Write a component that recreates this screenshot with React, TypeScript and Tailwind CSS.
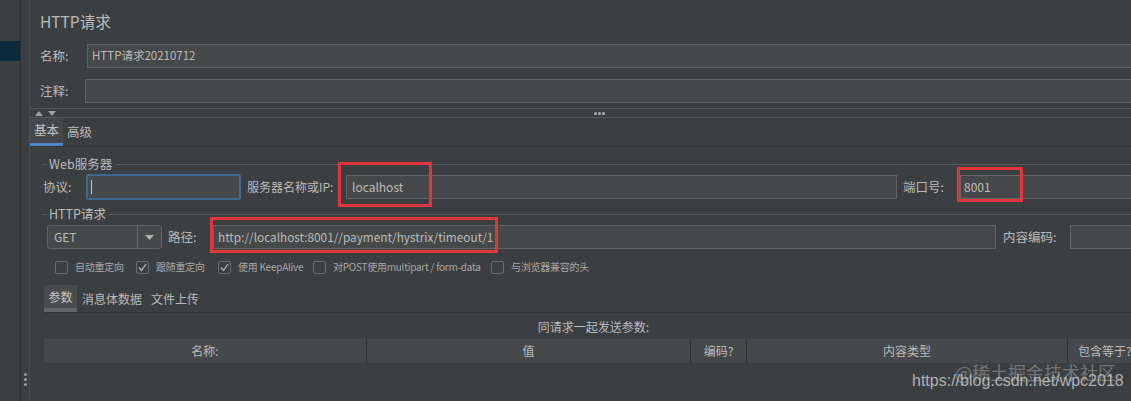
import React from "react";

const F = "font-['Noto_Sans_CJK_SC','Noto_Sans',sans-serif]";

function Check({ checked, label, w }: { checked?: boolean; label: string; w: string }) {
  return (
    <div className={`flex items-center shrink-0 ${w}`}>
      <div className="w-[13px] h-[13px] border border-[#6b6e70] rounded-[2px] bg-[#3c3f41] flex items-center justify-center shrink-0">
        {checked && (
          <svg width="11" height="11" viewBox="0 0 11 11">
            <path d="M2 5.5 L4.5 8.5 L9 2" fill="none" stroke="#b5b5b5" strokeWidth="1.3" />
          </svg>
        )}
      </div>
      <span className="ml-[7px] text-[10px] leading-none tracking-[-0.25px] text-[#a8a8a8] whitespace-nowrap">{label}</span>
    </div>
  );
}

function GroupTitle({ label }: { label: string }) {
  return (
    <div className="h-[16px] flex items-center">
      <div className="w-[5px] h-px bg-[#5a5d5f]" />
      <span className="ml-[1px] px-px text-[12.5px] leading-none whitespace-nowrap">{label}</span>
      <div className="flex-1 h-px bg-[#5a5d5f] ml-[2px]" />
    </div>
  );
}

export default function App() {
  return (
    <div className={`relative w-[1131px] h-[401px] overflow-hidden flex bg-[#3c3f41] text-[#bbbbbb] ${F}`}>
      {/* left tree strip */}
      <div className="w-[20px] shrink-0 flex flex-col">
        <div className="h-[41px]" />
        <div className="h-[20px] bg-[#0d293e]" />
      </div>
      <div className="w-px shrink-0 bg-[#2e3031]" />
      <div className="w-[8px] shrink-0 flex flex-col justify-end items-center pb-[15px]">
        <div className="flex flex-col gap-[2px]">
          <div className="w-[3px] h-[3px] rounded-full bg-[#9a9a9a]" />
          <div className="w-[3px] h-[3px] rounded-full bg-[#9a9a9a]" />
          <div className="w-[3px] h-[3px] rounded-full bg-[#9a9a9a]" />
        </div>
      </div>
      <div className="w-px shrink-0 bg-[#4c4f51]" />

      {/* main */}
      <div className="flex-1 min-w-0 flex flex-col">
        <div className="h-[44px] flex items-center pl-[10px] text-[15.5px] leading-none">HTTP请求</div>

        <div className="h-[24px] flex">
          <div className="w-[57px] pl-[10px] flex items-center text-[12.5px] leading-none">名称:</div>
          <div className="flex-1 border border-r-0 border-[#646464] bg-[#45494a] flex items-center pl-[4px] text-[11.5px] leading-none">
            HTTP请求20210712
          </div>
        </div>

        <div className="h-[24px] flex mt-[11px]">
          <div className="w-[55px] pl-[10px] flex items-center text-[12.5px] leading-none">注释:</div>
          <div className="flex-1 border border-r-0 border-[#646464] bg-[#45494a]" />
        </div>

        <div className="mt-[5px] h-px bg-[#56595b]" />
        <div className="h-[8px] flex items-center">
          <div className="ml-[5px] flex gap-[5px]">
            <svg width="8" height="5" viewBox="0 0 8 5"><path d="M0 5 L4 0 L8 5 Z" fill="#a0a0a0" /></svg>
            <svg width="8" height="5" viewBox="0 0 8 5"><path d="M0 0 L8 0 L4 5 Z" fill="#a0a0a0" /></svg>
          </div>
          <div className="ml-[538px] flex gap-[1px]">
            <div className="w-[3px] h-[3px] rounded-full bg-[#b0b0b0]" />
            <div className="w-[3px] h-[3px] rounded-full bg-[#b0b0b0]" />
            <div className="w-[3px] h-[3px] rounded-full bg-[#b0b0b0]" />
          </div>
        </div>
        <div className="h-px bg-[#56595b]" />

        {/* tabs */}
        <div className="h-[28px] flex">
          <div className="w-[33px] flex flex-col bg-[#45484a]">
            <div className="flex-1 flex items-center justify-center text-[12.5px] leading-none text-[#c4c4c4]">基本</div>
            <div className="h-[3px] bg-[#4a88c7]" />
          </div>
          <div className="ml-[4px] flex items-center text-[12.5px] leading-none">高级</div>
        </div>
        <div className="h-px bg-[#323435]" />

        {/* content */}
        <div className="pl-[12px] flex flex-col">
          <div className="mt-[9px]">
            <GroupTitle label="Web服务器" />
          </div>
          <div className="mt-[2px] h-[26px] flex items-center">
            <div className="w-[44px] pl-[1px] text-[12.5px] leading-none">协议:</div>
            <div className="w-[155px] h-[26px] border-2 border-[#3e6994] rounded-[2px] bg-[#45494a] flex items-center">
              <div className="ml-[3px] w-px h-[14px] bg-[#c8c8c8]" />
            </div>
            <div className="w-[105px] pl-[6px] text-[12px] leading-none whitespace-nowrap">服务器名称或IP:</div>
            <div className="relative w-[551px] h-[24px] border border-[#646464] bg-[#45494a] flex items-center pl-[5px] text-[12px] leading-none">
              localhost
              <div className="absolute left-[-9px] top-[-14px] w-[94px] h-[45px] border-[3px] border-[#e0363c]" />
            </div>
            <div className="w-[63px] pl-[6px] text-[12.5px] leading-none whitespace-nowrap">端口号:</div>
            <div className="relative flex-1 h-[24px] border border-r-0 border-[#646464] bg-[#45494a] flex items-center pl-[3px] text-[12px] leading-none">
              8001
              <div className="absolute left-[-4px] top-[-9px] w-[66px] h-[35px] border-[3px] border-[#e0363c]" />
            </div>
          </div>

          <div className="mt-[6px]">
            <GroupTitle label="HTTP请求" />
          </div>
          <div className="mt-[3px] h-[24px] flex items-center">
            <div className="ml-[5px] w-[115px] h-[24px] border border-[#646464] rounded-[3px] bg-[#45494a] flex">
              <div className="flex-1 flex items-center pl-[6px] text-[12px] leading-none">GET</div>
              <div className="w-[24px] border-l border-[#646464] flex items-center justify-center">
                <svg width="9" height="5" viewBox="0 0 9 5"><path d="M0 0 L9 0 L4.5 5 Z" fill="#b0b0b0" /></svg>
              </div>
            </div>
            <div className="w-[51px] pl-[6px] text-[12.5px] leading-none whitespace-nowrap">路径:</div>
            <div className="relative w-[783px] h-[24px] border border-[#646464] bg-[#45494a] flex items-center pl-[4px] text-[11.8px] leading-none whitespace-nowrap">
              http://localhost:8001//payment/hystrix/timeout/1
              <div className="absolute left-[-4px] top-[-9px] w-[288px] h-[36px] border-[3px] border-[#e0363c]" />
            </div>
            <div className="w-[74px] pl-[7px] text-[12.5px] leading-none whitespace-nowrap">内容编码:</div>
            <div className="flex-1 h-[24px] border border-r-0 border-[#646464] bg-[#45494a]" />
          </div>

          <div className="mt-[11px] ml-[13px] h-[14px] flex items-center">
            <Check label="自动重定向" w="w-[81px]" />
            <Check checked label="跟随重定向" w="w-[82px]" />
            <Check checked label="使用 KeepAlive" w="w-[95px]" />
            <Check label="对POST使用multipart / form-data" w="w-[178px]" />
            <Check label="与浏览器兼容的头" w="w-[120px]" />
          </div>

          {/* bottom tabs */}
          <div className="mt-[11px] ml-[2px] h-[27px] flex">
            <div className="w-[33px] flex flex-col bg-[#4a4d4f]">
              <div className="flex-1 flex items-center justify-center text-[12px] leading-none text-[#c8c8c8]">参数</div>
              <div className="h-[4px] bg-[#626567]" />
            </div>
            <div className="ml-[5px] flex items-center text-[12px] leading-none">消息体数据</div>
            <div className="ml-[9px] flex items-center text-[12px] leading-none">文件上传</div>
          </div>
          <div className="ml-[2px] h-px bg-[#333536]" />

          <div className="mt-[6px] ml-[2px] h-[16px] flex items-center justify-center text-[12px] leading-none">
            <span className="ml-[12px]">同请求一起发送参数:</span>
          </div>

          <div className="mt-[4px] ml-[2px] h-[24px] flex bg-[#46494b] text-[12px] leading-none whitespace-nowrap overflow-hidden">
            <div className="w-[322px] shrink-0 flex items-center justify-center">名称:</div>
            <div className="w-[324px] shrink-0 border-l border-[#2e3031] flex items-center justify-center">值</div>
            <div className="w-[56px] shrink-0 border-l border-[#2e3031] flex items-center justify-center">编码?</div>
            <div className="w-[321px] shrink-0 border-l border-[#2e3031] flex items-center justify-center">内容类型</div>
            <div className="flex-1 border-l border-[#2e3031] flex items-center pl-[10px]">包含等于?</div>
          </div>
        </div>
      </div>

      {/* watermark */}
      <div className="absolute left-[955px] top-[363px] text-[18px] leading-none text-white/30 whitespace-nowrap">
        @稀土掘金技术社区
      </div>
      <div className="absolute left-[912px] top-[373px] text-[16px] leading-none text-[#cfcfcf]/80 whitespace-nowrap font-['Liberation_Sans',sans-serif]">
        https://blog.csdn.net/wpc2018
      </div>
    </div>
  );
}
